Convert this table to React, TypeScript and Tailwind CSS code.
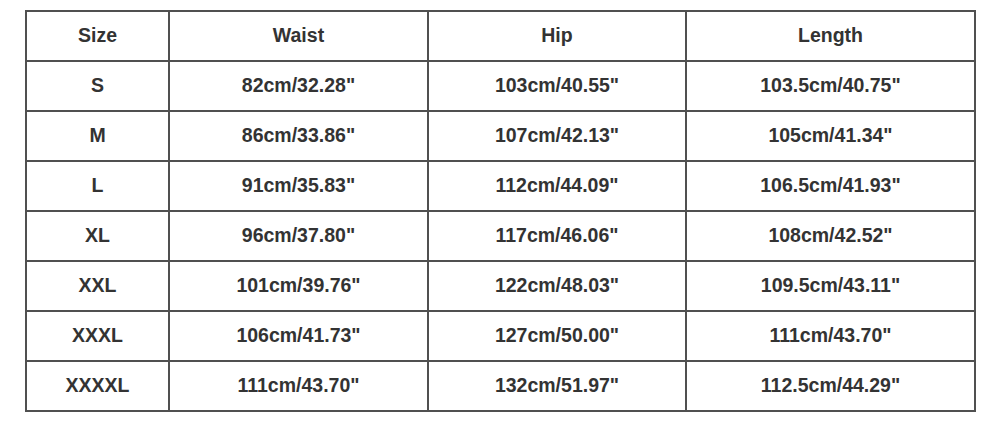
const rows = [
  ['S', '82cm/32.28"', '103cm/40.55"', '103.5cm/40.75"'],
  ['M', '86cm/33.86"', '107cm/42.13"', '105cm/41.34"'],
  ['L', '91cm/35.83"', '112cm/44.09"', '106.5cm/41.93"'],
  ['XL', '96cm/37.80"', '117cm/46.06"', '108cm/42.52"'],
  ['XXL', '101cm/39.76"', '122cm/48.03"', '109.5cm/43.11"'],
  ['XXXL', '106cm/41.73"', '127cm/50.00"', '111cm/43.70"'],
  ['XXXXL', '111cm/43.70"', '132cm/51.97"', '112.5cm/44.29"'],
];

export default function App() {
  const cell = 'border-2 border-[#505050] h-[50px] p-0 text-center align-middle';
  return (
    <div className="w-[1000px] h-[421px] bg-white pt-[10px] pl-[25px]">
      <table className="border-collapse table-fixed w-[949px] text-[19.5px] font-bold text-[#333] [font-family:'Liberation_Sans',Arial,sans-serif]">
        <colgroup>
          <col className="w-[143px]" />
          <col className="w-[259px]" />
          <col className="w-[258px]" />
          <col className="w-[289px]" />
        </colgroup>
        <thead>
          <tr>
            {['Size', 'Waist', 'Hip', 'Length'].map(h => (
              <th key={h} className={cell + ' font-bold'}>{h}</th>
            ))}
          </tr>
        </thead>
        <tbody>
          {rows.map(r => (
            <tr key={r[0]}>
              {r.map((c, i) => (
                <td key={i} className={cell}>{c}</td>
              ))}
            </tr>
          ))}
        </tbody>
      </table>
    </div>
  );
}
